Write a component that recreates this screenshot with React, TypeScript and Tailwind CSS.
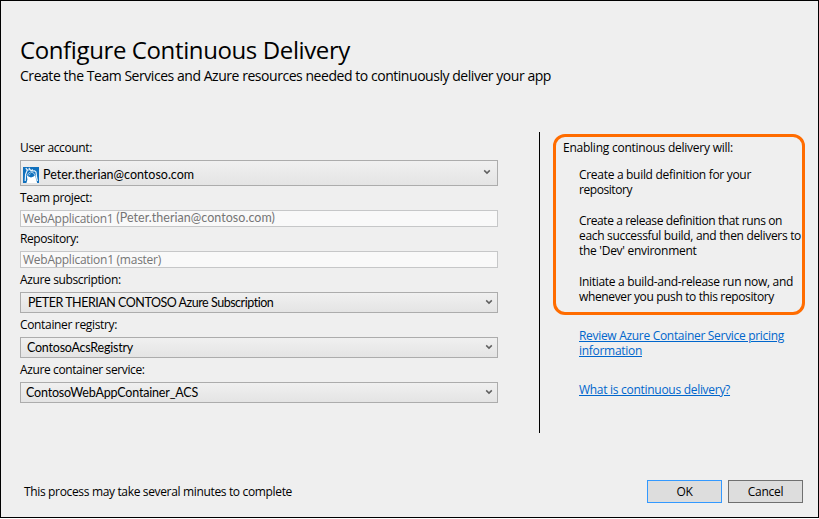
import type { ReactNode } from "react";

function Chevron() {
  return (
    <svg className="mb-px" width="8" height="6" viewBox="0 0 8 6" fill="none" stroke="#606060" strokeWidth="1.5">
      <path d="M1.2 1.4 4 4.1 6.8 1.4" />
    </svg>
  );
}

function Label({ children, spacing }: { children: ReactNode; spacing: string }) {
  return <div className={`h-4 leading-4 whitespace-nowrap ${spacing}`}>{children}</div>;
}

function Select({ children, className }: { children: ReactNode; className: string }) {
  return (
    <div
      className={`flex items-center border border-[#acacac] bg-linear-to-b from-[#f0f0f0] to-[#e4e4e4] font-[Lato,sans-serif] text-[12.5px] leading-4 whitespace-nowrap ${className}`}
    >
      {children}
    </div>
  );
}

function ReadOnly({ children }: { children: ReactNode }) {
  return (
    <div className="flex h-[17px] items-center border border-[#c6c7c8] bg-[#f9f9f9] pl-0.5 whitespace-nowrap text-[#757575]">
      {children}
    </div>
  );
}

function AccountIcon() {
  return (
    <svg width="16" height="16" viewBox="0 0 16 16" fill="none">
      <rect width="16" height="16" fill="#1070bd" />
      <path d="M3.4 16 4.4 12.4 3.8 8.6 5.6 9.6 8 10.6 10.6 9.4 12.2 8 13 12 14.2 16Z" fill="#fff" />
      <path
        d="M4.2 3.2 6.6 2.4 8.4 4 11.6 3.8 13 5 13.6 10.5 14.4 14M4.2 3.4 2.6 7.5 2.2 14M4.4 3 2.8 1.2M7.4 3 5.8 .8M8.4 4 9.6 2.4"
        stroke="#e8f3fb"
        strokeWidth="1.2"
      />
      <path d="M4.2 8.8 5.4 6.2 7.6 5 10.6 6 12 8.6M6 8.4 7.4 6.6" stroke="#b7d8f0" strokeWidth=".9" />
    </svg>
  );
}

export default function App() {
  return (
    <div className="h-[519px] w-[819px] bg-white font-['Open_Sans',sans-serif] text-xs text-black">
      <div className="flex h-[518px] flex-col border border-black bg-[#efefef] pt-[33px]">
        <header className="h-[98px] pl-[19px] whitespace-nowrap">
          <h1 className="text-2xl leading-8 tracking-[-0.384px]">Configure Continuous Delivery</h1>
          <p className="text-sm leading-5 tracking-[-0.456px]">
            Create the Team Services and Azure resources needed to continuously deliver your app
          </p>
        </header>

        <main className="flex h-[301px] pl-[19px]">
          <form className="flex w-[478px] flex-col gap-1 pt-2">
            <Label spacing="tracking-[-0.37px]">User account:</Label>
            <Select className="h-[26px] pr-1.5 pl-0.5">
              <span className="mt-[3px]">
                <AccountIcon />
              </span>
              <span className="mt-[3px] ml-1 flex-1">Peter.therian@contoso.com</span>
              <span className="mb-0.5">
                <Chevron />
              </span>
            </Select>
            <Label spacing="tracking-[-0.36px]">Team project:</Label>
            <ReadOnly>
              <span className="tracking-[-0.29px]">WebApplication1</span>
              <span className="mb-px ml-[3px] font-[Lato,sans-serif] text-[12.5px] tracking-[0.04px]">
                (Peter.therian@contoso.com)
              </span>
            </ReadOnly>
            <Label spacing="tracking-[-0.4px]">Repository:</Label>
            <ReadOnly>
              <span className="tracking-[-0.261px]">WebApplication1 (master)</span>
            </ReadOnly>
            <Label spacing="tracking-[-0.36px]">Azure subscription:</Label>
            <Select className="h-[21px] pr-1 pl-[7px]">
              <span className="flex-1 tracking-[-0.47px]">PETER THERIAN CONTOSO Azure Subscription</span>
              <Chevron />
            </Select>
            <Label spacing="tracking-[-0.341px]">Container registry:</Label>
            <Select className="h-[21px] pr-1 pl-1.5">
              <span className="flex-1 tracking-[-0.22px]">ContosoAcsRegistry</span>
              <Chevron />
            </Select>
            <Label spacing="tracking-[-0.386px]">Azure container service:</Label>
            <Select className="h-[21px] pr-1 pl-[5px]">
              <span className="flex-1 tracking-[-0.18px]">ContosoWebAppContainer_ACS</span>
              <Chevron />
            </Select>
          </form>

          <div className="ml-[41px] w-px bg-black" />

          <aside className="ml-[13px] w-[252px] pt-0.5 leading-[15px] whitespace-nowrap">
            <div className="h-[181px] rounded-[12px] border-3 border-[#ff6c00] pt-[3px] pl-[7px]">
              <p className="tracking-[-0.241px]">Enabling continous delivery will:</p>
              <div className="flex flex-col gap-4 pt-3 pl-4">
                <p>
                  <span className="block tracking-[-0.303px]">Create a build definition for your</span>
                  <span className="block tracking-[-0.436px]">repository</span>
                </p>
                <p>
                  <span className="block tracking-[-0.393px]">Create a release definition that runs on</span>
                  <span className="block tracking-[-0.318px]">each successful build, and then delivers to</span>
                  <span className="block tracking-[-0.281px]">the 'Dev' environment</span>
                </p>
                <p>
                  <span className="block tracking-[-0.309px]">Initiate a build-and-release run now, and</span>
                  <span className="block tracking-[-0.37px]">whenever you push to this repository</span>
                </p>
              </div>
            </div>
            <div className="flex flex-col gap-6 pt-[13px] pl-[26px] text-[#0066cc] underline underline-offset-1">
              <a>
                <span className="block tracking-[-0.307px]">Review Azure Container Service pricing</span>
                <span className="block tracking-[-0.292px]">information</span>
              </a>
              <a className="tracking-[-0.289px]">What is continuous delivery?</a>
            </div>
          </aside>
        </main>

        <footer className="mt-[47px] flex h-[23px] items-center pr-[15px] pl-[23px]">
          <span className="flex-1 tracking-[-0.343px] whitespace-nowrap">
            This process may take several minutes to complete
          </span>
          <button className="h-[23px] w-[75px] border border-[#3399ff] bg-[#dddddd] leading-4 tracking-[-0.4px]">OK</button>
          <button className="ml-1.5 h-[23px] w-[75px] border border-[#707070] bg-[#dddddd] leading-4 tracking-[-0.3px]">
            Cancel
          </button>
        </footer>
      </div>
    </div>
  );
}
